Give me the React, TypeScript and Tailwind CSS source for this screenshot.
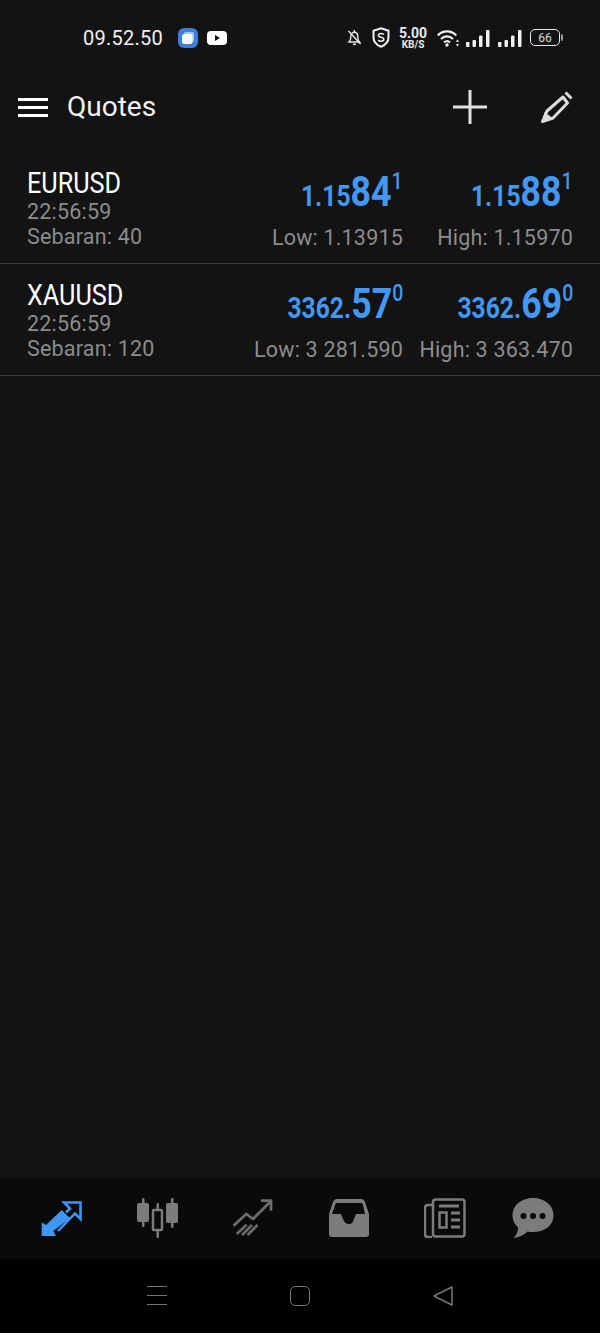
import React from "react";

const font = { fontFamily: "Roboto, sans-serif" };

function Signal({ className }: { className: string }) {
  return (
    <svg className={className} width="24" height="18" viewBox="0 0 24 18" fill="#f0f0f0">
      <rect x="0" y="13" width="3.500" height="5" rx="1" />
      <rect x="6.500" y="11" width="3.500" height="7" rx="1" />
      <rect x="13" y="6.500" width="3.500" height="11.500" rx="1" />
      <rect x="20" y="1" width="3.500" height="17" rx="1" />
    </svg>
  );
}

function StatusBar() {
  return (
    <div className="flex h-[74px] items-center pl-[83px] pt-[1px] text-[#f0f0f0]">
      <span className="w-[95px] text-[20px] leading-none tracking-[0.25px]">09.52.50</span>
      <svg width="20" height="20" viewBox="0 0 20 20">
        <rect width="20" height="20" rx="6" fill="#3f7fdc" />
        <rect x="6" y="4" width="10" height="10" rx="2" fill="#a9c6f2" />
        <rect x="4" y="6" width="10.5" height="10" rx="2" fill="#f3f6fb" />
      </svg>
      <svg className="ml-[9px]" width="20" height="14" viewBox="0 0 20 14">
        <rect width="20" height="14" rx="4" fill="#fff" />
        <path d="M8 4l5 3-5 3z" fill="#131313" />
      </svg>
      <svg className="ml-[120px]" width="15" height="17" viewBox="0 0 15 17" fill="none" stroke="#e6e6e6" strokeWidth="1.4">
        <path d="M2 13h10.5c-1.2-1.2-1.7-2.5-1.7-5 0-3-1.400-4.800-3.500-4.800S3.800 5 3.800 8c0 2.500-.6 3.800-1.800 5z" />
        <path d="M6 15.200h3M7.300 1v2M1.500 2l12 13" />
      </svg>
      <svg className="ml-[10px]" width="18" height="21" viewBox="0 0 18 21">
        <path d="M9 1.200l7.500 2.600v6.400c0 4.500-3 7.700-7.500 9.500-4.500-1.800-7.500-5-7.500-9.500V3.800z" fill="none" stroke="#f0f0f0" strokeWidth="2" />
        <path d="M11.800 7.500c-.6-.7-1.600-1-2.800-1-1.500 0-2.600.7-2.600 1.900 0 2.600 5.400 1.200 5.400 3.900 0 1.200-1.200 1.900-2.800 1.900-1.200 0-2.200-.4-2.900-1.100" fill="none" stroke="#f0f0f0" strokeWidth="1.500" />
      </svg>
      <div className="ml-[8px] flex w-[30px] flex-col items-center font-bold text-[#e8e8e8]">
        <span className="text-[14px] leading-[14px]">5.00</span>
        <span className="text-[10px] leading-[10px]">KB/S</span>
      </div>
      <svg className="ml-[9px]" width="23" height="18" viewBox="0 0 23 18" fill="none" stroke="#f0f0f0" strokeWidth="2.200">
        <path d="M.8 6.500c5-5.500 13.400-5.500 18.400 0M4 10c3.400-3.400 8.600-3.400 12 0M7 13.300c1.800-1.500 4.200-1.500 6 0" />
        <circle cx="10" cy="16" r="1.700" fill="#f0f0f0" stroke="none" />
        <path d="M20.500 10.500l-1.800 2.300h3.600zM20.500 17.500l-1.800-2.300h3.600z" fill="#f0f0f0" stroke="none" />
      </svg>
      <Signal className="ml-[6px]" />
      <Signal className="ml-[8px]" />
      <div className="ml-[8px] flex items-center">
        <div className="flex h-[17px] w-[30px] items-center justify-center rounded-[5px] border-[1.5px] border-[#e8e8e8] text-[12px] leading-none text-[#d8d8d8]">
          66
        </div>
        <div className="ml-[1px] h-[7px] w-[2px] rounded-r-sm bg-[#9a9a9a]" />
      </div>
    </div>
  );
}

function Header() {
  return (
    <div className="flex h-[66px] items-center pl-[18px]">
      <div className="flex w-[30px] flex-col gap-[5px]">
        <div className="h-[3px] bg-white" />
        <div className="h-[3px] bg-white" />
        <div className="h-[3px] bg-white" />
      </div>
      <span className="ml-[19px] text-[28px] leading-none text-[#f2f2f2]">Quotes</span>
      <svg className="ml-[297px]" width="34" height="34" viewBox="0 0 34 34" fill="none" stroke="#e2e2e2" strokeWidth="3">
        <path d="M0 17h34M17 0v34" />
      </svg>
      <svg className="ml-[54px]" width="32" height="32" viewBox="0 0 32 32" fill="none" stroke="#dcdcdc" strokeWidth="3" strokeLinejoin="round">
        <path d="M22 6L6 20 1.500 30.500 12 27 26.500 12z" />
        <path d="M24.500 1.500l6 6" />
        <path d="M1.500 30.500L3.500 21l8 6z" fill="#dcdcdc" stroke="none" />
      </svg>
    </div>
  );
}

type PriceProps = { head: string; big: string; sup: string };

function Price({ head, big, sup }: PriceProps) {
  return (
    <div className="h-[40px] origin-right scale-x-[0.85] whitespace-nowrap text-right font-bold leading-[40px] text-[#4298f3]">
      <span className="text-[29px]">{head}</span>
      <span className="text-[42px]">{big}</span>
      <span className="align-[17px] text-[23px] font-medium">{sup}</span>
    </div>
  );
}

type QuoteProps = {
  symbol: string;
  spread: string;
  bid: PriceProps;
  ask: PriceProps;
  low: string;
  high: string;
};

function QuoteRow({ symbol, spread, bid, ask, low, high }: QuoteProps) {
  const small = "text-[21.5px] leading-[25px] tracking-[0.2px] text-[#8c8c8c]";
  return (
    <div className="flex h-[112px] border-b border-[#3a3a3a] pl-[27px] pr-[27px] pt-[10px]">
      <div className="flex-1">
        <div className="h-[37px] origin-left scale-x-[0.87] text-[29px] leading-[42px] text-white">{symbol}</div>
        <div className={small}>22:56:59</div>
        <div className={small}>{spread}</div>
      </div>
      <div className="flex flex-col items-end">
        <Price {...bid} />
        <div className={`mt-[23px] whitespace-nowrap ${small}`}>{low}</div>
      </div>
      <div className="flex w-[170px] flex-col items-end">
        <Price {...ask} />
        <div className={`mt-[23px] whitespace-nowrap ${small}`}>{high}</div>
      </div>
    </div>
  );
}

function BottomNav() {
  return (
    <div className="flex h-[81px] items-center bg-[#0a0a0a] pl-[40px] pb-[1px]">
      <svg width="42" height="38" viewBox="0 0 42 38">
        <path d="M1.700 37V23.300L6 26 21.700 11 30 19.300 13.300 32 16 37z" fill="#4096f3" />
        <path d="M18 32L35 14.500l5.500 5.500V3.500H24l6 6-4 4" fill="none" stroke="#4096f3" strokeWidth="2.500" />
      </svg>
      <svg className="ml-[54px]" width="43" height="40" viewBox="0 0 43 40" fill="#7c7c7c">
        <rect x="6" y="0" width="2.500" height="29" rx="1" />
        <rect x="1" y="5" width="12" height="19" rx="2" />
        <rect x="20.500" y="5" width="2.500" height="8" rx="1" />
        <rect x="20.500" y="31" width="2.500" height="9" rx="1" />
        <rect x="17" y="12" width="9" height="20" rx="1" fill="none" stroke="#7c7c7c" strokeWidth="2.500" />
        <rect x="35" y="0" width="2.500" height="30" rx="1" />
        <rect x="30" y="5" width="12" height="20" rx="2" />
      </svg>
      <svg className="ml-[54px]" width="41" height="38" viewBox="0 0 41 38" fill="none" stroke="#6c6c6c" strokeWidth="2.700">
        <path d="M.5 26.700L13.300 15l6.700 5L37 3" />
        <path d="M28 1.700h10v10" />
        <path d="M3.700 35l10-9.300M9 36l10-10M14.500 36l10-10" />
      </svg>
      <svg className="ml-[54px]" width="42" height="38" viewBox="0 0 42 38">
        <path d="M9 0h24c2 0 3 1 4 3l4 12v20c0 2-1 3-3 3H4c-2 0-3-1-3-3V15L5 3c1-2 2-3 4-3z" fill="#7c7c7c" />
        <path d="M9 4h24c1 0 2 1 2 2l2 9-9 0-2 5c-1 3-2 5-5 5s-5-2-6-5l-2-5-9 0 3-9c0-1 1-2 2-2z" fill="#0a0a0a" />
      </svg>
      <svg className="ml-[54px]" width="42" height="40" viewBox="0 0 42 40" fill="none" stroke="#7c7c7c" strokeWidth="2.500">
        <path d="M9 7H4c-2 0-3 1-3 3v26c0 2 1 3 3 3h4" />
        <rect x="9" y="1.500" width="31.500" height="37" rx="2.500" />
        <path d="M15 8h20" strokeWidth="3" />
        <rect x="15.500" y="14.500" width="7" height="15" strokeWidth="2.500" />
        <path d="M27 15h9M27 22h9M27 29h9" strokeWidth="2.800" />
      </svg>
      <svg className="ml-[46px]" width="42" height="40" viewBox="0 0 42 40">
        <path d="M21 0c11 0 20.500 7 20.500 17.500S32 34 21 34c-2 0-4-.2-5.500-.6C12.500 37 6 39.500 1.500 40c2.500-2 4.500-6 4.700-10.500C2.500 26.500 0.500 22.500 0.500 17.500 0.500 7 10 0 21 0z" fill="#7c7c7c" />
        <circle cx="11.500" cy="18" r="3" fill="#0a0a0a" />
        <circle cx="21" cy="18" r="3" fill="#0a0a0a" />
        <circle cx="30.500" cy="18" r="3" fill="#0a0a0a" />
      </svg>
    </div>
  );
}

function SystemNav() {
  return (
    <div className="flex h-[74px] items-center bg-black pl-[147px] pb-[1px]">
      <div className="flex w-[20px] flex-col gap-[7.500px]">
        <div className="h-[1.500px] bg-[#757575]" />
        <div className="h-[1.500px] bg-[#757575]" />
        <div className="h-[1.500px] bg-[#757575]" />
      </div>
      <div className="ml-[123px] h-[20px] w-[20px] rounded-[5px] border-[1.500px] border-[#757575]" />
      <svg className="ml-[123px]" width="20" height="20" viewBox="0 0 20 20" fill="none" stroke="#757575" strokeWidth="1.500" strokeLinejoin="round">
        <path d="M1 10L19 1v18z" />
      </svg>
    </div>
  );
}

export default function App() {
  return (
    <div className="flex h-[1333px] w-[600px] flex-col overflow-hidden bg-[#131313]" style={font}>
      <StatusBar />
      <Header />
      <div className="mt-[12px] flex-1">
        <QuoteRow
          symbol="EURUSD"
          spread="Sebaran: 40"
          bid={{ head: "1.15", big: "84", sup: "1" }}
          ask={{ head: "1.15", big: "88", sup: "1" }}
          low="Low: 1.13915"
          high="High: 1.15970"
        />
        <QuoteRow
          symbol="XAUUSD"
          spread="Sebaran: 120"
          bid={{ head: "3362.", big: "57", sup: "0" }}
          ask={{ head: "3362.", big: "69", sup: "0" }}
          low="Low: 3 281.590"
          high="High: 3 363.470"
        />
      </div>
      <BottomNav />
      <SystemNav />
    </div>
  );
}
